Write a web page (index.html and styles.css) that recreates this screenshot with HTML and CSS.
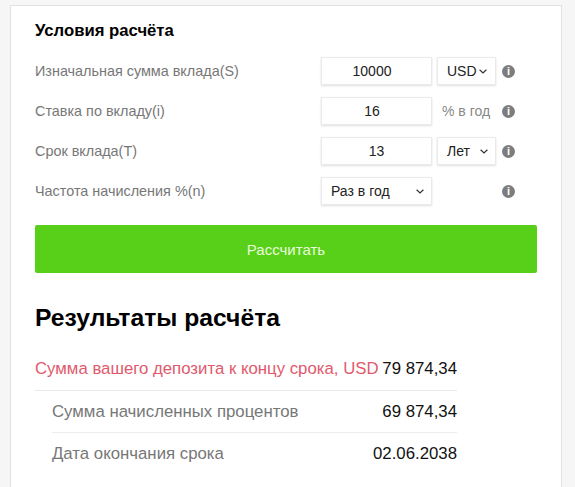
FILE: index.html
```html
<!DOCTYPE html>
<html lang="ru">
<head>
<meta charset="utf-8">
<title>Условия расчёта</title>
<link rel="stylesheet" href="styles.css">
</head>
<body>
<main class="card">
  <h2 class="sub">Условия расчёта</h2>
  <div class="form">
    <div class="row">
      <span class="label">Изначальная сумма вклада(S)</span>
      <div class="field num">10000</div>
      <div class="field unit sel sel-tight"><span>USD</span><svg class="chev" viewBox="0 0 8 5"><path d="M.6.8 4 4l3.4-3.2"/></svg></div>
      <span class="info">i</span>
    </div>
    <div class="row">
      <span class="label">Ставка по вкладу(i)</span>
      <div class="field num">16</div>
      <span class="unit suffix">% в год</span>
      <span class="info">i</span>
    </div>
    <div class="row">
      <span class="label">Срок вклада(T)</span>
      <div class="field num num-center">13</div>
      <div class="field unit sel"><span>Лет</span><svg class="chev" viewBox="0 0 8 5"><path d="M.6.8 4 4l3.4-3.2"/></svg></div>
      <span class="info">i</span>
    </div>
    <div class="row">
      <span class="label">Частота начисления %(n)</span>
      <div class="field wide sel"><span>Раз в год</span><svg class="chev" viewBox="0 0 8 5"><path d="M.6.8 4 4l3.4-3.2"/></svg></div>
      <span class="unit"></span>
      <span class="info">i</span>
    </div>
  </div>
  <button class="submit" type="button">Рассчитать</button>
  <h1 class="title">Результаты расчёта</h1>
  <div class="results">
    <div class="res res-main"><span class="res-name">Сумма вашего депозита к концу срока, USD</span><span>79 874,34</span></div>
    <div class="res res-sub"><span class="res-name">Сумма начисленных процентов</span><span>69 874,34</span></div>
    <div class="res res-sub"><span class="res-name">Дата окончания срока</span><span>02.06.2038</span></div>
  </div>
</main>
</body>
</html>
```

FILE: styles.css
```css
* { box-sizing: border-box; }
html, body { height: 100%; }
body {
  margin: 0;
  padding: 5px 13px 0 10px;
  background: #f6f6f6;
  font-family: "Liberation Sans", Arial, sans-serif;
  overflow: hidden;
}
.card {
  height: 100%;
  background: #fff;
  border: 1px solid #e2e2e2;
  border-bottom: 0;
  padding: 14px 24px 0 24px;
}
.sub {
  margin: 0;
  font-size: 16.7px;
  line-height: 22px;
  font-weight: 700;
  color: #000;
}
.form {
  margin-top: 15px;
  display: flex;
  flex-direction: column;
  gap: 12px;
}
.row {
  display: flex;
  align-items: center;
  height: 28px;
}
.label {
  width: 286px;
  font-size: 14.4px;
  color: #777;
}
.field {
  height: 28px;
  background: #fff;
  border: 1px solid #eaeaea;
  box-shadow: 0 1px 2px rgba(0, 0, 0, .12);
  font-size: 14px;
  color: #222;
}
.num {
  width: 111px;
  margin-right: 5px;
  padding-right: 9px;
  line-height: 27px;
  text-align: center;
}
.num-center { padding-right: 0; }
.unit { width: 59px; flex: none; }
.suffix {
  font-size: 14px;
  color: #888;
  padding-left: 5px;
}
.sel {
  display: flex;
  align-items: center;
  justify-content: space-between;
  padding: 0 7px 0 9px;
}
.sel-tight { padding-right: 8px; }
.wide { width: 111px; margin-right: 5px; }
.chev {
  width: 8px;
  height: 5px;
  fill: none;
  stroke: #333;
  stroke-width: 1.2;
}
.info {
  width: 13px;
  height: 13px;
  margin-left: 6px;
  border-radius: 50%;
  background: #7d7d7d;
  color: #fff;
  font-size: 11px;
  font-weight: 700;
  line-height: 13px;
  text-align: center;
}
.submit {
  display: block;
  width: 502px;
  height: 48px;
  margin-top: 20px;
  border: 0;
  border-radius: 2px;
  background: #58d01a;
  color: #e9fbdc;
  font: 15px "Liberation Sans", Arial, sans-serif;
}
.title {
  margin: 28px 0 0;
  font-size: 24.7px;
  line-height: 34px;
  font-weight: 700;
  color: #000;
}
.results {
  width: 422px;
  margin-top: 16px;
  font-size: 16.8px;
  color: #111;
}
.res {
  display: flex;
  justify-content: space-between;
  align-items: center;
  height: 42px;
}
.res-main { height: 40px; padding-bottom: 4px; border-bottom: 1px solid #e8e8e8; }
.res-main .res-name { color: #e0596c; }
.res-sub { margin-left: 17px; border-bottom: 1px solid #ececec; }
.res-sub:last-child { border-bottom: 0; }
.res-sub .res-name { color: #777; }
```
